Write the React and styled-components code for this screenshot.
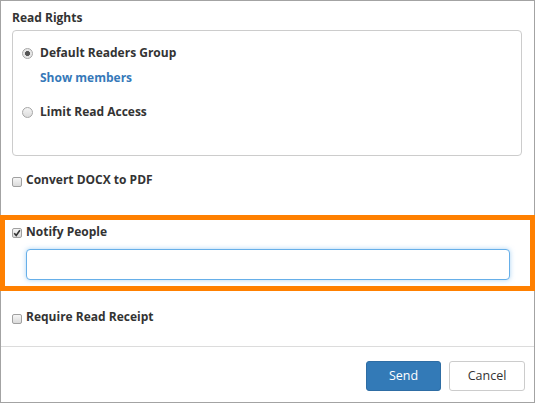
import React from "react";
import styled, { createGlobalStyle } from "styled-components";

const Global = createGlobalStyle`
  html, body { margin: 0; padding: 0; background: #fff; }
  body { font-family: "Open Sans", "Liberation Sans", sans-serif; color: #333; }
  * { box-sizing: border-box; }
`;

const Dialog = styled.div`
  width: 535px;
  height: 403px;
  border: 1px solid #a3a3a3;
  display: flex;
  flex-direction: column;
  background: #fff;
`;

const Section = styled.div`
  padding: 0 11px;
  display: flex;
  flex-direction: column;
  align-items: flex-start;
`;

const Title = styled.div`
  font-size: 12px;
  font-weight: 700;
  line-height: 16px;
  margin-top: 9px;
`;

const Fieldset = styled.div`
  align-self: stretch;
  margin-top: 4px;
  margin-right: 1px;
  height: 126px;
  border: 1px solid #cccccc;
  border-radius: 4px;
  padding: 14px 9px 0;
  display: flex;
  flex-direction: column;
  align-items: flex-start;
`;

const Row = styled.label`
  display: flex;
  align-items: center;
  height: 16px;
  margin-top: ${(p) => p.$mt || 0}px;
  font-size: 12px;
  font-weight: 700;
  line-height: 16px;
  color: #333;
`;

const RadioDot = styled.span`
  width: 11px;
  height: 11px;
  border-radius: 50%;
  border: 1px solid #a6a6a6;
  background: ${(p) =>
    p.$checked
      ? "radial-gradient(circle, #555 0 2.2px, #e2e2e2 2.8px, #f2f2f2 100%)"
      : "linear-gradient(#f4f4f4, #dcdcdc)"};
  margin-right: 7px;
  flex: none;
`;

const Box = styled.span`
  width: 10px;
  height: 10px;
  border: 1px solid #a0a0a0;
  border-radius: 2px;
  background: linear-gradient(#f6f6f6, #dadada);
  margin-right: 4px;
  margin-top: ${(p) => p.$drop || 0}px;
  flex: none;
  display: flex;
  align-items: center;
  justify-content: center;
`;

const LinkText = styled.a`
  margin-top: 9px;
  margin-left: 18px;
  font-size: 12px;
  font-weight: 700;
  line-height: 16px;
  color: #3679b9;
  text-decoration: none;
  cursor: pointer;
`;

const Highlight = styled.div`
  margin: 27px -1px 0;
  border: 5px solid #ff8000;
  padding: 4px 0 6px 7px;
  display: flex;
  flex-direction: column;
  align-items: flex-start;
`;

const TextInput = styled.input`
  margin-top: 9px;
  margin-left: 14px;
  width: 484px;
  height: 31px;
  border: 1px solid #66afe9;
  border-radius: 4px;
  box-shadow: 0 0 5px rgba(102, 175, 233, 0.55);
  outline: none;
  background: #fff;
  font-family: inherit;
  font-size: 12px;
  padding: 0 8px;
`;

const Footer = styled.div`
  margin-top: auto;
  height: 56px;
  border-top: 1px solid #dcdcdc;
  display: flex;
  justify-content: flex-end;
  align-items: flex-start;
  gap: 8px;
  padding: 14px 9px 0 0;
`;

const Button = styled.button`
  width: ${(p) => p.$w}px;
  height: 30px;
  border-radius: 3px;
  font-family: "Open Sans", "Liberation Sans", sans-serif;
  font-size: 12.5px;
  line-height: 1;
  padding: 0;
  cursor: pointer;
  border: 1px solid ${(p) => (p.$primary ? "#2e6da4" : "#cccccc")};
  background: ${(p) => (p.$primary ? "#337ab7" : "#fff")};
  color: ${(p) => (p.$primary ? "#fff" : "#333")};
`;

const Check = () => (
  <svg width="8" height="8" viewBox="0 0 8 8">
    <path d="M1.2 4.3 L3.2 6.4 L6.9 1.3" fill="none" stroke="#333" strokeWidth="1.6" />
  </svg>
);

export default function App() {
  return (
    <>
      <Global />
      <Dialog>
        <Section>
          <Title>Read Rights</Title>
          <Fieldset>
            <Row>
              <RadioDot $checked />
              Default Readers Group
            </Row>
            <LinkText>Show members</LinkText>
            <Row $mt={18}>
              <RadioDot />
              Limit Read Access
            </Row>
          </Fieldset>
          <Row $mt={16}>
            <Box $drop={4} />
            Convert DOCX to PDF
          </Row>
        </Section>
        <Highlight>
          <Row>
            <Box $drop={2}>
              <Check />
            </Box>
            Notify People
          </Row>
          <TextInput type="text" />
        </Highlight>
        <Section>
          <Row $mt={18}>
            <Box $drop={4} />
            Require Read Receipt
          </Row>
        </Section>
        <Footer>
          <Button $primary $w={75}>Send</Button>
          <Button $w={76}>Cancel</Button>
        </Footer>
      </Dialog>
    </>
  );
}
